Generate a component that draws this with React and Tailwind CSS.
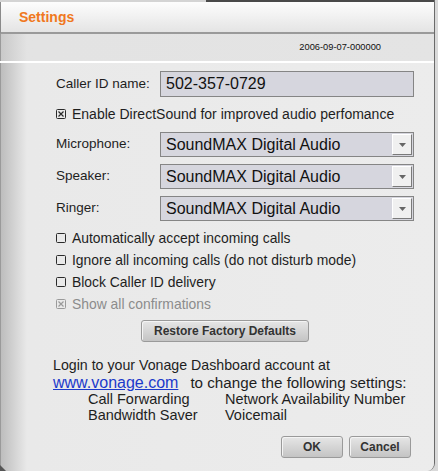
import React from "react";

const font = "font-['Liberation_Sans',Arial,sans-serif]";

function Check({ checked, disabled }) {
  const c = disabled ? "#9a9a9a" : "#2a2a2a";
  return (
    <svg width="10" height="10" viewBox="0 0 10 10" className="shrink-0">
      <rect x="0.5" y="0.5" width="9" height="9" rx="1" fill="none" stroke={c} strokeWidth="1" />
      {checked && (
        <path d="M2.5 2.5 L7.5 7.5 M7.5 2.5 L2.5 7.5" stroke={c} strokeWidth="1.2" />
      )}
    </svg>
  );
}

function Dropdown({ value }) {
  return (
    <div className="flex items-center h-[25px] w-[254px] bg-[#d6d6de] border border-[#858585] pl-[5px] pr-[1px]">
      <span className="flex-1 text-[16px] text-[#111] leading-none">{value}</span>
      <div className="w-[20px] h-[21px] bg-[#f0f0f0] border border-t-white border-l-white border-r-[#7a7a7a] border-b-[#7a7a7a] flex items-center justify-center">
        <svg width="7" height="4" viewBox="0 0 7 4">
          <path d="M0 0 L7 0 L3.5 4 Z" fill="#666" />
        </svg>
      </div>
    </div>
  );
}

function Row({ label, children }) {
  return (
    <div className="flex items-center">
      <div className="w-[104px] text-[13.5px] text-[#1e1e1e]">{label}</div>
      {children}
    </div>
  );
}

function CheckRow({ label, checked, disabled }) {
  return (
    <div className={`flex items-center h-[22px] gap-[6px] text-[13.9px] ${disabled ? "text-[#8c8c8c]" : "text-[#1e1e1e]"}`}>
      <Check checked={checked} disabled={disabled} />
      <span>{label}</span>
    </div>
  );
}

function Btn({ children, w }) {
  return (
    <div
      className={`${w} h-[22px] flex items-center justify-center rounded-[3px] border border-[#9a9a9a] bg-linear-to-b from-[#e6e6e6] to-[#c4c4c4] text-[12px] font-bold text-[#333] shadow-[inset_1px_1px_0_#f4f4f4]`}
    >
      {children}
    </div>
  );
}

export default function App() {
  return (
    <div className={`${font} w-[438px] h-[471px] overflow-hidden bg-[#d9d9d9] flex`}>
      <div className="w-[435px] h-[471px] flex flex-col border-r border-[#6a6a6a] rounded-br-[8px] overflow-hidden relative">
        {/* top strip */}
        <div className="flex h-[2px]">
          <div className="w-[206px] bg-[#d4d4d4]" />
          <div className="flex-1 bg-[#4a4a4a]" />
        </div>
        {/* header */}
        <div className="h-[32px] flex items-center pl-[18px] bg-linear-to-b from-[#fdfdfd] to-[#e4e4e4] border-b-2 border-[#9a9a9a] border-l border-l-[#8a8a8a]">
          <span className="text-[14px] font-bold text-[#f07820]">Settings</span>
        </div>
        {/* date band */}
        <div className="h-[27px] flex items-center justify-end pr-[53px] bg-linear-to-r from-[#c9c9c9] from-0% via-[#e3e3e3] via-[6%] to-[#e4e4e4] border-l border-[#9a9a9a]">
          <span className="text-[9.3px] text-[#111]">2006-09-07-000000</span>
        </div>
        <div className="h-[2px] bg-white" />
        {/* body */}
        <div className="flex-1 flex flex-col pl-[55px] bg-linear-to-r from-[#bdbdbd] from-0% via-[#e9e9e9] via-[6%] to-[#ececec] border-l border-[#9a9a9a]">
          <div className="mt-[8px]">
            <Row label="Caller ID name:">
              <div className="h-[26px] w-[254px] bg-[#d6d6de] border border-[#858585] flex items-center pl-[5px] text-[16px] text-[#111]">
                502-357-0729
              </div>
            </Row>
          </div>
          <div className="mt-[8px] h-[18px] flex items-center gap-[6px] text-[14px] text-[#1e1e1e]">
            <Check checked />
            <span>Enable DirectSound for improved audio perfomance</span>
          </div>
          <div className="mt-[9px] flex flex-col gap-[7px]">
            <Row label="Microphone:">
              <Dropdown value="SoundMAX Digital Audio" />
            </Row>
            <Row label="Speaker:">
              <Dropdown value="SoundMAX Digital Audio" />
            </Row>
            <Row label="Ringer:">
              <Dropdown value="SoundMAX Digital Audio" />
            </Row>
          </div>
          <div className="mt-[6px] flex flex-col">
            <CheckRow label="Automatically accept incoming calls" />
            <CheckRow label="Ignore all incoming calls (do not disturb mode)" />
            <CheckRow label="Block Caller ID delivery" />
            <CheckRow label="Show all confirmations" checked disabled />
          </div>
          <div className="mt-[5px] pl-[85px]">
            <Btn w="w-[168px]">Restore Factory Defaults</Btn>
          </div>
          <div className="mt-[15px] -ml-[3px] text-[#1e1e1e]">
            <div className="text-[14.2px] leading-[17px]">Login to your Vonage Dashboard account at</div>
            <div className="flex items-end leading-[17px] gap-[12px]">
              <span className="text-[16px] text-[#1c3acb] underline underline-offset-1">www.vonage.com</span>
              <span className="text-[15.2px]">to change the following settings:</span>
            </div>
            <div className="pl-[35px] grid grid-cols-[137px_auto] text-[14.5px] leading-[16px]">
              <span>Call Forwarding</span>
              <span>Network Availability Number</span>
              <span>Bandwidth Saver</span>
              <span>Voicemail</span>
            </div>
          </div>
          <div className="mt-[13px] flex justify-end gap-[6px] pr-[23px]">
            <Btn w="w-[62px]">OK</Btn>
            <Btn w="w-[62px]">Cancel</Btn>
          </div>
        </div>
        <div className="absolute left-0 bottom-0 w-0 h-0 border-l-[6px] border-l-[#555] border-t-[6px] border-t-transparent" />
      </div>
    </div>
  );
}
